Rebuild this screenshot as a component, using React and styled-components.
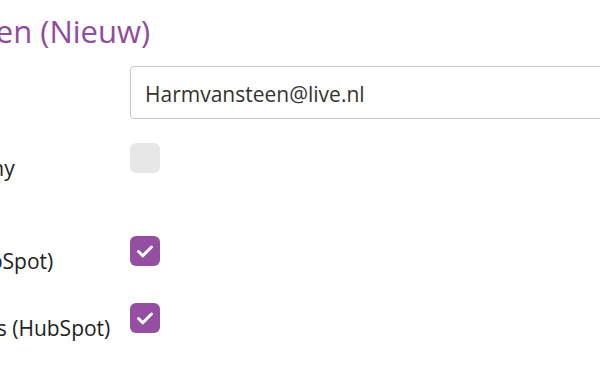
import styled, { createGlobalStyle } from "styled-components";

const GlobalStyle = createGlobalStyle`
  html, body {
    margin: 0;
    padding: 0;
    background: #fff;
    overflow: hidden;
  }
  body {
    font-family: "Open Sans", "Liberation Sans", sans-serif;
  }
`;

const Page = styled.div`
  width: 900px;
  margin-left: -168px;
  padding-top: 13px;
`;

const Title = styled.h2`
  margin: 0 0 17px;
  font-size: 31px;
  line-height: 36px;
  font-weight: 400;
  color: #924aa1;
`;

const Form = styled.form`
  display: flex;
  flex-direction: column;
`;

const Row = styled.div`
  display: flex;
  align-items: flex-start;
  margin-bottom: ${(p) => p.$space || 24}px;
`;

const Label = styled.label`
  width: 298px;
  flex-shrink: 0;
  padding-top: 17px;
  font-size: 21px;
  line-height: 26px;
  color: #222;
  white-space: nowrap;
`;

const Control = styled.div`
  flex: 1;
  display: flex;
`;

const Input = styled.input`
  box-sizing: border-box;
  width: 520px;
  height: 53px;
  padding: 3px 14px 0;
  border: 1px solid #c8c8c8;
  border-radius: 4px;
  font-family: inherit;
  font-size: 21px;
  color: #333;
  outline: none;
`;

const Box = styled.span`
  margin-top: 5px;
  width: 30px;
  height: 30px;
  border-radius: 6px;
  background: ${(p) => (p.$checked ? "#944fa3" : "#e7e7e7")};
  display: flex;
  align-items: center;
  justify-content: center;
`;

const Check = ({ checked }) => (
  <Box $checked={checked}>
    {checked && (
      <svg width="30" height="30" viewBox="0 0 30 30">
        <polyline
          points="8.5,15.5 12.8,19.8 21.5,11"
          fill="none"
          stroke="#fff"
          strokeWidth="3"
          strokeLinecap="round"
          strokeLinejoin="round"
        />
      </svg>
    )}
  </Box>
);

const App = () => {
  return (
    <>
      <GlobalStyle />
      <Page>
        <Title>Inschrijvingen (Nieuw)</Title>
        <Form>
          <Row $space={19}>
            <Label>E-mailadres</Label>
            <Control>
              <Input defaultValue="Harmvansteen@live.nl" />
            </Control>
          </Row>
          <Row>
            <Label>
              Werkt bij company
              <br />
              (primair)
            </Label>
            <Control>
              <Check checked={false} />
            </Control>
          </Row>
          <Row>
            <Label>Nieuwsbrief (HubSpot)</Label>
            <Control>
              <Check checked />
            </Control>
          </Row>
          <Row>
            <Label>Marketing e-mails (HubSpot)</Label>
            <Control>
              <Check checked />
            </Control>
          </Row>
        </Form>
      </Page>
    </>
  );
};

export default App;
